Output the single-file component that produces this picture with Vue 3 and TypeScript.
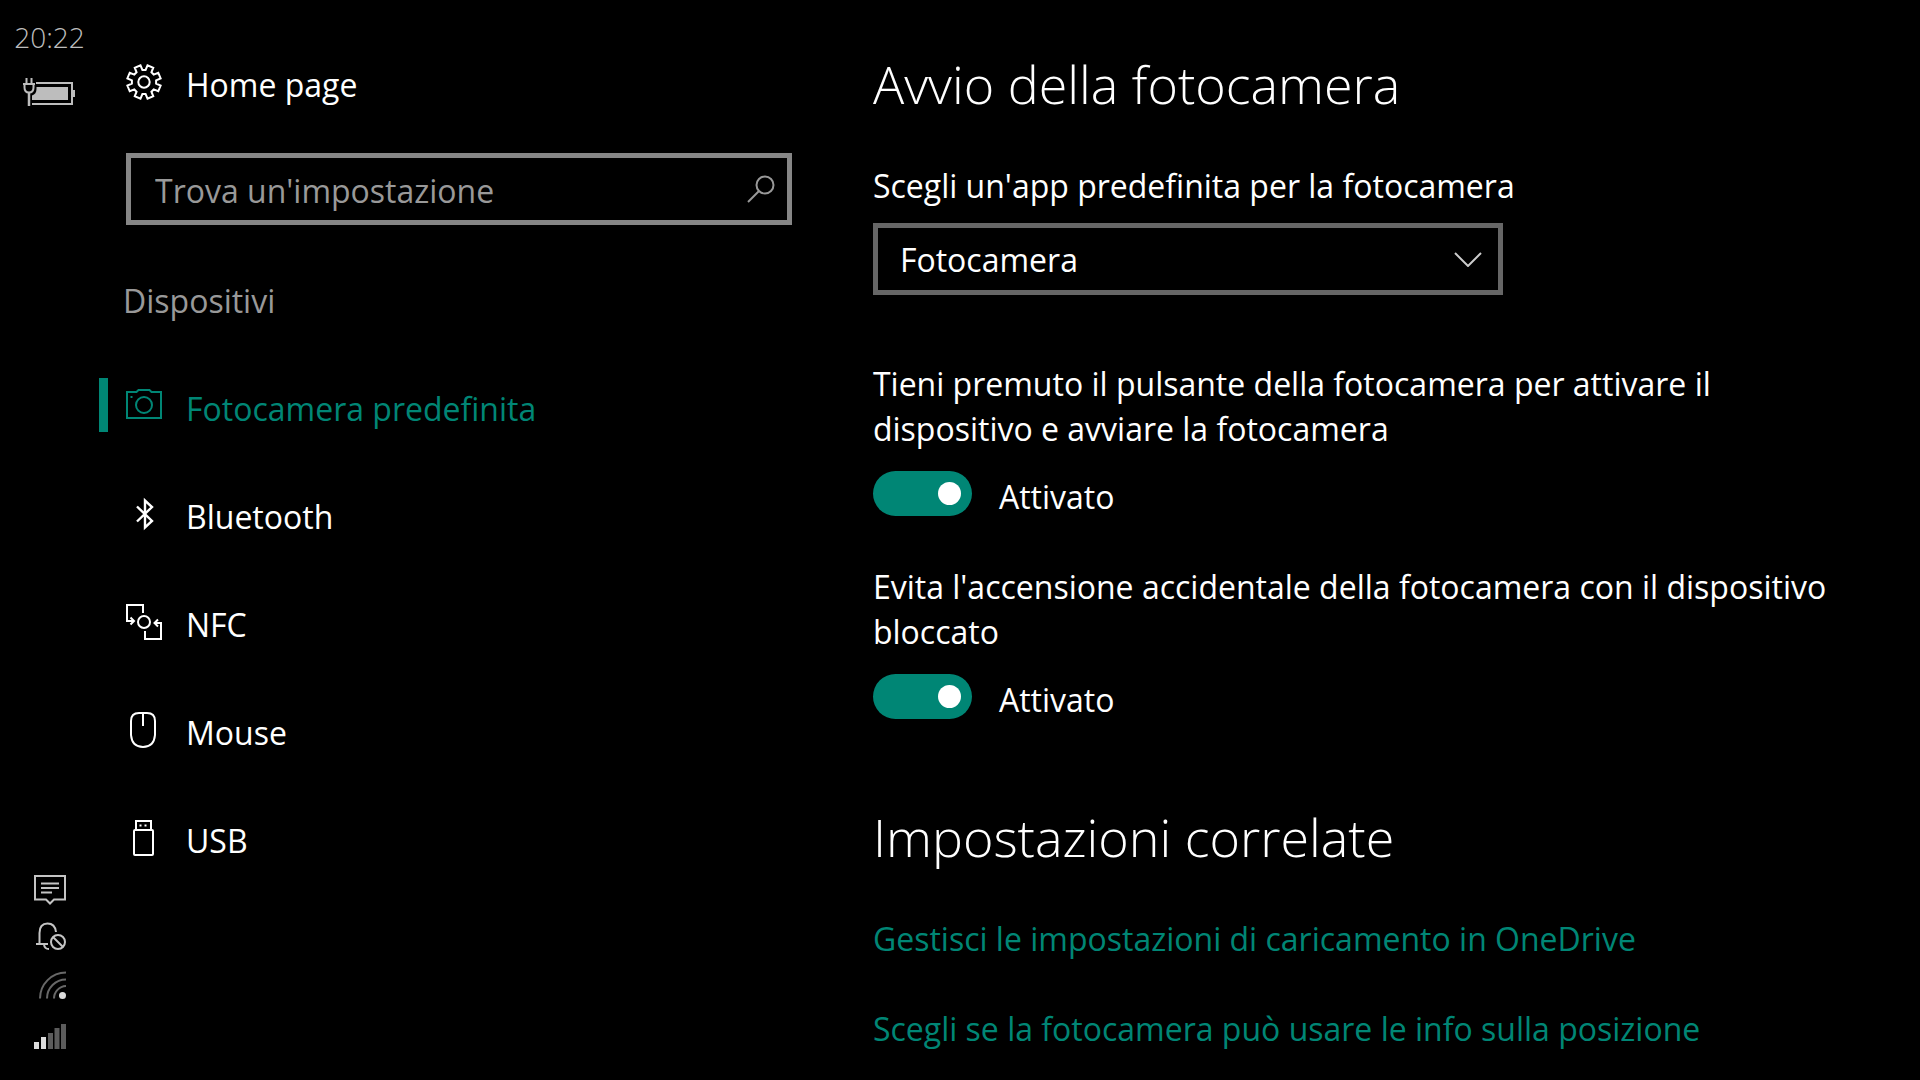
<script setup lang="ts">
import { ref } from 'vue'

interface NavItem {
  id: string
  label: string
}

interface ToggleSetting {
  id: string
  label: string
  enabled: boolean
}

const navItems: NavItem[] = [
  { id: 'camera', label: 'Fotocamera predefinita' },
  { id: 'bluetooth', label: 'Bluetooth' },
  { id: 'nfc', label: 'NFC' },
  { id: 'mouse', label: 'Mouse' },
  { id: 'usb', label: 'USB' },
]

const activeId = ref('camera')
const query = ref('')
const cameraApp = ref('Fotocamera')

const toggles = ref<ToggleSetting[]>([
  {
    id: 'hold-button',
    label: 'Tieni premuto il pulsante della fotocamera per attivare il dispositivo e avviare la fotocamera',
    enabled: true,
  },
  {
    id: 'prevent-accidental',
    label: "Evita l'accensione accidentale della fotocamera con il dispositivo bloccato",
    enabled: true,
  },
])

const links: string[] = [
  'Gestisci le impostazioni di caricamento in OneDrive',
  'Scegli se la fotocamera può usare le info sulla posizione',
]

// Outline of the eight-toothed settings gear, centred on 18,18
function gearPath(): string {
  const points: string[] = []
  for (let i = 0; i < 8; i++) {
    const mid = i * 45 + 22.5
    const corners: [number, number][] = [
      [-15, 12.2],
      [-10.5, 17],
      [10.5, 17],
      [15, 12.2],
    ]
    for (const [offset, radius] of corners) {
      const a = ((mid + offset) * Math.PI) / 180
      points.push(`${(18 + radius * Math.cos(a)).toFixed(2)} ${(18 + radius * Math.sin(a)).toFixed(2)}`)
    }
  }
  return `M${points.join('L')}Z`
}
</script>

<template>
  <div class="phone">
    <aside class="rail">
      <div class="rail-group">
        <time class="clock">20:22</time>
        <svg class="battery" width="54" height="28" viewBox="0 0 54 28" aria-label="Batteria in carica">
          <path d="M13 5H49V26H9" fill="none" stroke="#bdbdbd" stroke-width="2" />
          <path d="M50 12H52V19H50Z" fill="#bdbdbd" />
          <path d="M13.500 9H45V22H9V17.500C12 16.500 13.500 14.500 13.500 11Z" fill="#bdbdbd" />
          <path d="M3.500 0V5M8.500 0V5M0 6H12M1.500 6V9.500Q1.500 14.500 6 14.500Q10.500 14.500 10.500 9.500V6" fill="none" stroke="#bdbdbd" stroke-width="2" />
          <path d="M6 14V28" stroke="#bdbdbd" stroke-width="2.500" />
        </svg>
      </div>
      <div class="rail-group tray">
        <svg width="32" height="32" viewBox="0 0 32 32" aria-label="Messaggi">
          <path d="M1 3H31V26.500H20L16 30.500L12 26.500H1Z" fill="none" stroke="#c4c4c4" stroke-width="2" />
          <path d="M7 10.500H25M7 15H25M7 19.500H18" stroke="#c4c4c4" stroke-width="2" />
        </svg>
        <svg width="32" height="32" viewBox="0 0 32 32" aria-label="Notifiche disattivate">
          <path d="M2 22H14M5.500 22V11Q5.500 1.500 13.500 1.500Q21 1.500 22 10M10 22.500Q10.500 27 15 27" fill="none" stroke="#c4c4c4" stroke-width="2" />
          <circle cx="24" cy="20" r="7" fill="none" stroke="#c4c4c4" stroke-width="2" />
          <path d="M19 15L29 25" stroke="#c4c4c4" stroke-width="2" />
        </svg>
        <svg width="32" height="32" viewBox="0 0 32 32" aria-label="Wi-Fi">
          <path d="M6 27.500A26 26 0 0 1 32 1.500M13 27.500A19 19 0 0 1 32 8.500M20 27.500A12.500 12.500 0 0 1 32 15" fill="none" stroke="#686868" stroke-width="2" />
          <circle cx="28.500" cy="24.500" r="3.500" fill="#dcdcdc" />
        </svg>
        <svg width="32" height="32" viewBox="0 0 32 32" aria-label="Segnale">
          <path d="M0 22H5V29H0ZM7 17H12V29H7Z" fill="#dcdcdc" />
          <path d="M14 13H19V29H14ZM20.500 8H25.500V29H20.500ZM27 4H32V29H27Z" fill="#5c5c5c" />
        </svg>
      </div>
    </aside>

    <nav class="sidebar">
      <a class="row home" href="#home">
        <svg class="icon" width="36" height="36" viewBox="0 0 36 36" aria-hidden="true">
          <path :d="gearPath()" />
          <circle cx="18" cy="18" r="5.700" />
        </svg>
        <span class="row-label">Home page</span>
      </a>

      <form class="search" role="search" @submit.prevent>
        <input v-model="query" class="search-input" type="text" placeholder="Trova un'impostazione" aria-label="Trova un'impostazione" />
        <button class="search-button" type="submit" aria-label="Cerca">
          <svg width="28" height="28" viewBox="0 0 28 28" aria-hidden="true">
            <circle cx="18" cy="10" r="8.500" />
            <path d="M12 16L1 27" />
          </svg>
        </button>
      </form>

      <h2 class="category">Dispositivi</h2>

      <ul class="nav-list">
        <li v-for="item in navItems" :key="item.id">
          <a
            class="row nav-item"
            :class="{ active: item.id === activeId }"
            :href="`#${item.id}`"
            @click="activeId = item.id"
          >
            <svg class="icon" width="36" height="36" viewBox="0 0 36 36" aria-hidden="true">
              <template v-if="item.id === 'camera'">
                <path d="M1 4H10.500L12.500 2H23.500L25.500 4H35V30H1Z" />
                <circle cx="18" cy="17" r="8" />
                <path d="M4.500 9H6.500" />
              </template>
              <template v-else-if="item.id === 'bluetooth'">
                <path d="M11 10.500L26 25L19 31.500V4.500L26 11L11 25.500" stroke-width="2.400" />
              </template>
              <template v-else-if="item.id === 'nfc'">
                <path d="M17 9V1H1V17H7M4.500 13.500L8 17L4.500 20.500" />
                <circle cx="18" cy="18" r="6" />
                <path d="M19 27V35H35V19H29M32 15.500L28.500 19L32 22.500" />
              </template>
              <template v-else-if="item.id === 'mouse'">
                <path d="M13 1H21Q29 1 29 9V23Q28 35 17 35Q6 35 5 23V9Q5 1 13 1ZM17 1V14" />
              </template>
              <template v-else>
                <rect x="8" y="10" width="19" height="25" rx="1" />
                <path d="M10 10V1H25V10M13.500 5.500H15.500M18.500 5.500H20.500" />
              </template>
            </svg>
            <span class="row-label">{{ item.label }}</span>
          </a>
        </li>
      </ul>
    </nav>

    <main class="content">
      <h1 class="heading">Avvio della fotocamera</h1>

      <section class="field">
        <label for="camera-app">Scegli un'app predefinita per la fotocamera</label>
        <div class="select-box">
          <select id="camera-app" v-model="cameraApp">
            <option>Fotocamera</option>
          </select>
          <svg class="chevron" width="28" height="15" viewBox="0 0 28 15" aria-hidden="true">
            <path d="M1 1L14 14L27 1" />
          </svg>
        </div>
      </section>

      <section class="toggles">
        <div v-for="t in toggles" :key="t.id" class="toggle">
          <label :for="t.id">{{ t.label }}</label>
          <div class="toggle-row">
            <input :id="t.id" v-model="t.enabled" type="checkbox" role="switch" class="switch" />
            <span class="toggle-state">{{ t.enabled ? 'Attivato' : 'Disattivato' }}</span>
          </div>
        </div>
      </section>

      <h2 class="heading">Impostazioni correlate</h2>
      <div class="links">
        <a v-for="link in links" :key="link" href="#">{{ link }}</a>
      </div>
    </main>
  </div>
</template>

<style>
body {
  margin: 0;
  background: #000;
}
</style>

<style scoped>
.phone {
  --accent: #008675;
  display: grid;
  grid-template-columns: 99px 17fr 23fr;
  min-height: 100vh;
  background: #000;
  color: #fff;
  font-family: 'Open Sans', 'Noto Sans', sans-serif;
  font-size: 32px;
  line-height: 45px;
}

svg {
  display: block;
  flex: none;
}

a {
  color: inherit;
  text-decoration: none;
}

.rail {
  display: flex;
  flex-direction: column;
  justify-content: space-between;
  box-sizing: border-box;
  padding: 16px 0 28px;
}

.rail-group {
  display: flex;
  flex-direction: column;
  align-items: center;
}

.clock {
  color: #bdbdbd;
  font-size: 28px;
  line-height: 42px;
  font-weight: 350;
}

.battery {
  margin-top: 20px;
}

.tray {
  gap: 17px;
}

.sidebar {
  display: flex;
  flex-direction: column;
  padding: 55px 81px 0 0;
}

.row {
  display: flex;
  align-items: center;
  gap: 24px;
  padding-left: 27px;
}

.home {
  height: 54px;
}

.row-label {
  padding-top: 4px;
}

.icon {
  fill: none;
  stroke: currentColor;
  stroke-width: 2;
}

.search {
  display: flex;
  align-items: stretch;
  box-sizing: border-box;
  height: 72px;
  margin: 44px 0 0 27px;
  border: 5px solid #868686;
}

.search-input {
  flex: 1;
  min-width: 0;
  padding: 2px 0 0 24px;
  border: 0;
  outline: 0;
  background: transparent;
  color: #fff;
  font: inherit;
}

.search-input::placeholder {
  color: #999;
  opacity: 1;
}

.search-button {
  display: flex;
  align-items: center;
  padding: 0 12px;
  border: 0;
  background: transparent;
}

.search-button svg {
  fill: none;
  stroke: #999;
  stroke-width: 2;
}

.category {
  margin: 53px 0 0 24px;
  color: #999;
  font-size: inherit;
  font-weight: 400;
}

.nav-list {
  margin: 29px 0 0;
  padding: 0;
  list-style: none;
}

.nav-item {
  position: relative;
  height: 108px;
}

.active {
  color: var(--accent);
}

.active::before {
  content: '';
  position: absolute;
  top: 26px;
  left: 0;
  width: 9px;
  height: 54px;
  background: var(--accent);
}

.content {
  padding: 48px 72px 24px 0;
}

.heading {
  margin: 0 0 43px;
  font-size: 52px;
  line-height: 72px;
  font-weight: 350;
}

.field label,
.toggle label {
  display: block;
}

.select-box {
  position: relative;
  max-width: 630px;
  margin-top: 15px;
}

.select-box select {
  appearance: none;
  display: block;
  box-sizing: border-box;
  width: 100%;
  height: 72px;
  padding: 0 64px 0 22px;
  border: 5px solid #666;
  border-radius: 0;
  outline: 0;
  background: #000;
  color: #fff;
  font: inherit;
}

.chevron {
  position: absolute;
  top: 29px;
  right: 21px;
  fill: none;
  stroke: #ccc;
  stroke-width: 2;
  pointer-events: none;
}

.toggles {
  display: flex;
  flex-direction: column;
  gap: 48px;
  margin: 66px 0 82px;
}

.toggle-row {
  display: flex;
  align-items: center;
  gap: 27px;
  height: 45px;
  margin-top: 20px;
}

.switch {
  appearance: none;
  display: flex;
  align-items: center;
  box-sizing: border-box;
  width: 99px;
  height: 45px;
  margin: 0;
  padding: 0 11px;
  border-radius: 23px;
  background: #333;
}

.switch:checked {
  justify-content: flex-end;
  background: var(--accent);
}

.switch::before {
  content: '';
  width: 23px;
  height: 23px;
  border-radius: 50%;
  background: #fff;
}

.toggle-state {
  padding-top: 6px;
}

.links {
  display: flex;
  flex-direction: column;
  align-items: flex-start;
  gap: 45px;
  color: var(--accent);
}
</style>
